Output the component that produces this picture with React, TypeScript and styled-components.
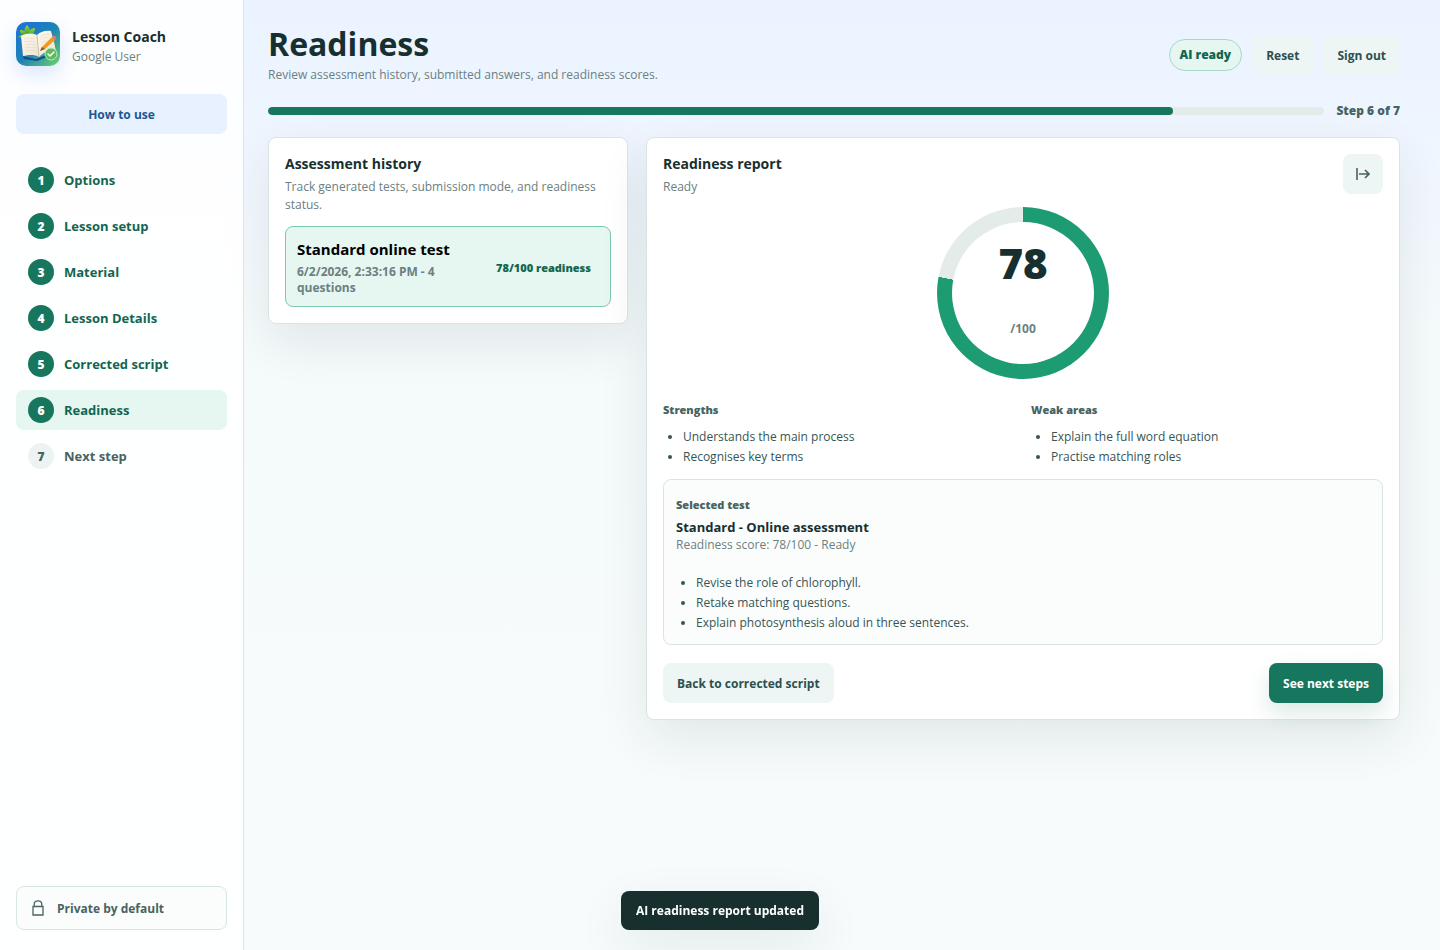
import React from "react";
import styled, { createGlobalStyle } from "styled-components";

const GlobalStyle = createGlobalStyle`
  *, *::before, *::after { box-sizing: border-box; }
  body {
    margin: 0;
    min-height: 100vh;
    color: #17302f;
    font-family: "Segoe UI", "Open Sans", "Noto Sans", sans-serif;
    font-size: 12px;
    background: linear-gradient(180deg, #eaf3ff 0, #f0f6ff 160px, #f5fafb 320px, #f7fbfc 100%) no-repeat #f7fbfc;
  }
  h1, h2, h3, p, ul, ol { margin: 0; padding: 0; }
  button { font: inherit; border: 0; cursor: pointer; }
`;

const Shell = styled.div`
  display: grid;
  grid-template-columns: 244px minmax(0, 1fr);
  min-height: 100vh;
`;

const Sidebar = styled.aside`
  position: sticky;
  top: 0;
  height: 100vh;
  display: flex;
  flex-direction: column;
  padding: 22px 16px 20px;
  border-right: 1px solid #dbe5e6;
  background: rgba(255, 255, 255, 0.88);
`;

const Brand = styled.div`
  display: flex;
  align-items: center;
  gap: 12px;
`;

const BrandText = styled.div`
  padding-top: 4px;
`;

const Logo = styled.svg`
  width: 44px;
  height: 44px;
  flex: none;
  border-radius: 10px;
  box-shadow: 0 8px 20px rgba(37, 99, 235, 0.16);
`;

const BrandName = styled.p`
  font-size: 14px;
  font-weight: 700;
  line-height: 22px;
`;

const Muted = styled.p`
  color: #6b8080;
  line-height: 18px;
`;

const GuideButton = styled.button`
  height: 40px;
  margin-top: 28px;
  border-radius: 8px;
  background: #e7f1ff;
  color: #1d5793;
  font-weight: 700;
`;

const StepList = styled.ol`
  display: grid;
  gap: 6px;
  margin-top: 26px;
  list-style: none;
`;

const StepButton = styled.button<{ $active: boolean; $done: boolean }>`
  display: flex;
  align-items: center;
  gap: 10px;
  width: 100%;
  height: 40px;
  padding: 0 12px;
  border-radius: 8px;
  background: ${(p) => (p.$active ? "#e6f6f1" : "transparent")};
  color: ${(p) => (p.$done ? "#12664f" : "#486362")};
  font-size: 13px;
  font-weight: 700;
  text-align: left;
`;

const StepNumber = styled.span<{ $done: boolean }>`
  display: grid;
  place-items: center;
  width: 26px;
  height: 26px;
  border-radius: 50%;
  background: ${(p) => (p.$done ? "#16775e" : "#edf3f3")};
  color: ${(p) => (p.$done ? "#ffffff" : "#486362")};
  font-size: 12px;
  font-weight: 800;
`;

const Privacy = styled.div`
  display: flex;
  align-items: center;
  gap: 12px;
  height: 44px;
  margin-top: auto;
  padding: 0 14px;
  border: 1px solid #d8e6e3;
  border-radius: 8px;
  background: #fbfdfc;
  color: #486362;
  font-weight: 700;
`;

const Main = styled.main`
  padding: 24px 40px 24px 24px;
`;

const PageHeader = styled.header`
  display: flex;
  align-items: center;
  justify-content: space-between;
  gap: 16px;
`;

const PageTitle = styled.h1`
  font-size: 32px;
  font-weight: 700;
  line-height: 40px;
`;

const PageLead = styled(Muted)`
  line-height: 22px;
`;

const Actions = styled.div`
  display: flex;
  align-items: center;
  gap: 10px;
`;

const StatusPill = styled.span`
  padding: 0 10px;
  border: 1px solid #a9d9cb;
  border-radius: 16px;
  background: #e6f6f1;
  color: #12664f;
  font-weight: 800;
  line-height: 30px;
`;

const Button = styled.button<{ $primary?: boolean }>`
  height: 40px;
  padding: 0 14px;
  border-radius: 8px;
  background: ${(p) => (p.$primary ? "#16775e" : "#eef6f5")};
  color: ${(p) => (p.$primary ? "#ffffff" : "#2c504f")};
  font-weight: 700;
  box-shadow: ${(p) => (p.$primary ? "0 10px 22px rgba(22, 119, 94, 0.16)" : "none")};
`;

const ProgressRow = styled.div`
  display: flex;
  align-items: center;
  gap: 12px;
  margin: 16px 0 17px;
  color: #486362;
  font-weight: 800;
  line-height: 18px;
`;

const Track = styled.div`
  flex: 1;
  height: 8px;
  border-radius: 4px;
  background: #e4ecea;
  overflow: hidden;
`;

const Fill = styled.div`
  height: 100%;
  border-radius: 4px;
  background: #16775e;
`;

const Columns = styled.div`
  display: grid;
  grid-template-columns: minmax(280px, 360px) minmax(0, 1fr);
  gap: 18px;
  align-items: start;
`;

const Card = styled.section`
  padding: 16px;
  border: 1px solid #d8e6e3;
  border-radius: 8px;
  background: #ffffff;
  box-shadow: 0 18px 50px rgba(23, 48, 47, 0.09);
`;

const CardTitle = styled.h2`
  margin-bottom: 4px;
  font-size: 14px;
  font-weight: 700;
  line-height: 20px;
`;

const HistoryItem = styled.button`
  display: flex;
  align-items: center;
  justify-content: space-between;
  gap: 12px;
  width: 100%;
  margin-top: 12px;
  padding: 12px 11px 10px;
  border: 1px solid #7fc8b4;
  border-radius: 8px;
  background: #e6f6f1;
  color: #000000;
  text-align: left;
`;

const HistoryTitle = styled.span`
  display: block;
  font-size: 15px;
  font-weight: 700;
  line-height: 20px;
`;

const HistoryMeta = styled.span`
  display: block;
  margin-top: 5px;
  color: #6b8080;
  font-weight: 700;
  line-height: 16px;
`;

const HistoryScore = styled.span`
  padding: 0 8px;
  color: #12664f;
  font-size: 11px;
  font-weight: 800;
  white-space: nowrap;
`;

const ReportHeader = styled.div`
  display: flex;
  align-items: flex-start;
  justify-content: space-between;
`;

const IconButton = styled.button`
  display: grid;
  place-items: center;
  width: 40px;
  height: 40px;
  border-radius: 8px;
  background: #eef6f5;
  color: #486362;
`;

const Ring = styled.div`
  display: grid;
  place-items: center;
  width: 172px;
  height: 172px;
  margin: 11px auto 22px;
  border-radius: 50%;
`;

const RingCore = styled.div`
  display: flex;
  flex-direction: column;
  align-items: center;
  gap: 30px;
  width: 142px;
  height: 142px;
  padding-top: 13px;
  border-radius: 50%;
  background: #ffffff;
`;

const Score = styled.strong`
  font-size: 42px;
  font-weight: 800;
  line-height: 56px;
`;

const ScoreMax = styled.span`
  color: #6b8080;
  font-weight: 700;
  line-height: 16px;
`;

const Findings = styled.div`
  display: grid;
  grid-template-columns: 1fr 1fr;
  gap: 16px;
`;

const Label = styled.h3`
  color: #486362;
  font-size: 11px;
  font-weight: 800;
  line-height: 18px;
`;

const Bullets = styled.ul`
  margin-top: 8px;
  padding-left: 20px;
  color: #365554;
  line-height: 20px;
`;

const Selected = styled.div`
  margin-top: 12px;
  padding: 16px 12px 11px;
  border: 1px solid #d8e6e3;
  border-radius: 8px;
  background: #fbfdfc;
`;

const SelectedName = styled.p`
  margin-top: 4px;
  font-size: 13px;
  font-weight: 700;
  line-height: 18px;
`;

const SelectedBullets = styled(Bullets)`
  margin-top: 19px;
`;

const CardFooter = styled.div`
  display: flex;
  justify-content: space-between;
  margin-top: 18px;
`;

const Toast = styled.div`
  position: fixed;
  bottom: 20px;
  left: 50%;
  transform: translateX(-50%);
  padding: 0 15px;
  border-radius: 8px;
  background: #17302f;
  color: #ffffff;
  font-weight: 700;
  line-height: 39px;
  white-space: nowrap;
  box-shadow: 0 18px 50px rgba(23, 48, 47, 0.09);
`;

const STEPS = ["Options", "Lesson setup", "Material", "Lesson Details", "Corrected script", "Readiness", "Next step"];
const CURRENT = 6;
const SCORE = 78;

function BrandLogo() {
  return (
    <Logo viewBox="0 0 44 44" aria-hidden="true">
      <defs>
        <linearGradient id="sky" x1="0" y1="0" x2="1" y2="1">
          <stop offset="0" stopColor="#1f6fe0" />
          <stop offset="0.5" stopColor="#1c83b4" />
          <stop offset="1" stopColor="#6ed36a" />
        </linearGradient>
        <linearGradient id="page" x1="0" y1="0" x2="1" y2="1">
          <stop offset="0" stopColor="#fffaf0" />
          <stop offset="1" stopColor="#eee3cf" />
        </linearGradient>
        <linearGradient id="leaf" x1="0" y1="0" x2="0" y2="1">
          <stop offset="0" stopColor="#8ed63f" />
          <stop offset="1" stopColor="#3c9c2c" />
        </linearGradient>
      </defs>
      <rect width="44" height="44" fill="url(#sky)" />
      <g fill="url(#leaf)">
        <path d="M11 13C7 10 8 6 11 3c3 3 4 7 1 10z" />
        <path d="M10 13C6 14 4 12 4 8c4 0 6 2 7 5z" />
        <path d="M12 13c0-4 3-7 7-7 0 4-2 7-6 8z" />
        <path d="M10 14c-3-2-6-1-8 1 3 2 7 2 9-1z" />
      </g>
      <path d="M7 34l13 3 17-7 3-6-1 8-18 7-13-2z" fill="#174c91" />
      <path d="M5 14c6-3 11-3 16-1l2 22c-5-3-10-2-16-1z" fill="url(#page)" />
      <path d="M21 13c3-3 8-5 14-4l5 19c-7 0-12 2-17 7z" fill="url(#page)" />
      <path d="M21 13l2 22" stroke="#cbbba0" strokeWidth="0.8" />
      <g fill="none" stroke="#ddd8ce" strokeWidth="0.6">
        <path d="M8 17c4-1 8-1 11 0M8 20c4-1 8-1 11 0M9 23c4-1 8-1 11 0M9 26c4-1 8-1 11 0M9 29c4-1 8-1 12 0" />
        <path d="M24 15c3-2 6-3 9-3M24 18c3-2 6-3 8-3M25 21c2-1 4-2 6-2" />
      </g>
      <path d="M26 25l10-10 3 3-10 9-5 2z" fill="#f39a1e" />
      <path d="M26 25l3 2-5 2z" fill="#8a5a30" />
      <path d="M36 15l1-1c2-1 4 1 3 3l-1 1z" fill="#e8708a" />
      <circle cx="35" cy="32" r="6" fill="#5bbd5a" stroke="#bfe8b8" strokeWidth="1" />
      <path d="M32 32l2 2 4-4" fill="none" stroke="#fff" strokeWidth="1.5" strokeLinecap="round" strokeLinejoin="round" />
    </Logo>
  );
}

function LockIcon() {
  return (
    <svg width="14" height="18" viewBox="0 0 14 18" fill="none" stroke="currentColor" strokeWidth="1.3" aria-hidden="true">
      <path d="M2 7.5h10V16H2z" />
      <path d="M3.2 7.5V5.2C3.2 3 4.6 1.8 7 1.8s3.8 1.2 3.8 3.4v2.3" />
    </svg>
  );
}

function ExitIcon() {
  return (
    <svg width="14" height="14" viewBox="0 0 14 14" fill="none" stroke="currentColor" aria-hidden="true">
      <path d="M1 1v12" strokeWidth="2" opacity="0.8" />
      <path d="M3 7h10M9 3l4 4-4 4" strokeWidth="1.7" />
    </svg>
  );
}

export default function App() {
  return (
    <>
      <GlobalStyle />
      <Shell>
        <Sidebar>
          <Brand>
            <BrandLogo />
            <BrandText>
              <BrandName>Lesson Coach</BrandName>
              <Muted>Google User</Muted>
            </BrandText>
          </Brand>
          <GuideButton type="button">How to use</GuideButton>
          <nav aria-label="Steps">
            <StepList>
              {STEPS.map((name, i) => {
                const n = i + 1;
                return (
                  <li key={name}>
                    <StepButton type="button" $active={n === CURRENT} $done={n <= CURRENT}>
                      <StepNumber $done={n <= CURRENT}>{n}</StepNumber>
                      {name}
                    </StepButton>
                  </li>
                );
              })}
            </StepList>
          </nav>
          <Privacy>
            <LockIcon />
            Private by default
          </Privacy>
        </Sidebar>

        <Main>
          <PageHeader>
            <div>
              <PageTitle>Readiness</PageTitle>
              <PageLead>Review assessment history, submitted answers, and readiness scores.</PageLead>
            </div>
            <Actions>
              <StatusPill>AI ready</StatusPill>
              <Button type="button">Reset</Button>
              <Button type="button">Sign out</Button>
            </Actions>
          </PageHeader>

          <ProgressRow>
            <Track>
              <Fill style={{ width: `${(CURRENT / STEPS.length) * 100}%` }} />
            </Track>
            <span>Step {CURRENT} of {STEPS.length}</span>
          </ProgressRow>

          <Columns>
            <Card>
              <CardTitle>Assessment history</CardTitle>
              <Muted>Track generated tests, submission mode, and readiness status.</Muted>
              <HistoryItem type="button">
                <span>
                  <HistoryTitle>Standard online test</HistoryTitle>
                  <HistoryMeta>6/2/2026, 2:33:16 PM - 4 questions</HistoryMeta>
                </span>
                <HistoryScore>{SCORE}/100 readiness</HistoryScore>
              </HistoryItem>
            </Card>

            <Card>
              <ReportHeader>
                <div>
                  <CardTitle>Readiness report</CardTitle>
                  <Muted>Ready</Muted>
                </div>
                <IconButton type="button" aria-label="Open report">
                  <ExitIcon />
                </IconButton>
              </ReportHeader>
              <Ring style={{ background: `conic-gradient(#1d9c73 ${SCORE}%, #e4ecea 0)` }}>
                <RingCore>
                  <Score>{SCORE}</Score>
                  <ScoreMax>/100</ScoreMax>
                </RingCore>
              </Ring>
              <Findings>
                <div>
                  <Label>Strengths</Label>
                  <Bullets>
                    <li>Understands the main process</li>
                    <li>Recognises key terms</li>
                  </Bullets>
                </div>
                <div>
                  <Label>Weak areas</Label>
                  <Bullets>
                    <li>Explain the full word equation</li>
                    <li>Practise matching roles</li>
                  </Bullets>
                </div>
              </Findings>
              <Selected>
                <Label>Selected test</Label>
                <SelectedName>Standard - Online assessment</SelectedName>
                <Muted>Readiness score: {SCORE}/100 - Ready</Muted>
                <SelectedBullets>
                  <li>Revise the role of chlorophyll.</li>
                  <li>Retake matching questions.</li>
                  <li>Explain photosynthesis aloud in three sentences.</li>
                </SelectedBullets>
              </Selected>
              <CardFooter>
                <Button type="button">Back to corrected script</Button>
                <Button type="button" $primary>See next steps</Button>
              </CardFooter>
            </Card>
          </Columns>
        </Main>
      </Shell>
      <Toast role="status">AI readiness report updated</Toast>
    </>
  );
}
